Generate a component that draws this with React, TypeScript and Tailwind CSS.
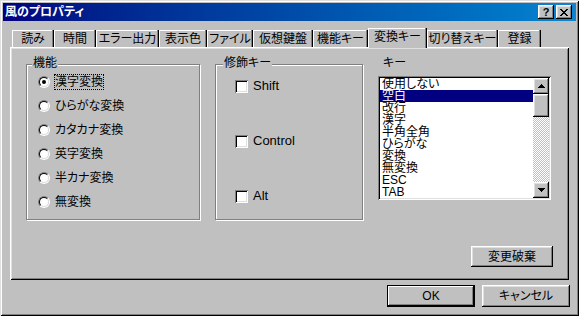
import React from "react";

const raised =
  "shadow-[inset_-1px_-1px_#000000,inset_1px_1px_#ffffff,inset_-2px_-2px_#808080,inset_2px_2px_#dfdfdf]";
const sunken =
  "shadow-[inset_1px_1px_#808080,inset_-1px_-1px_#ffffff,inset_2px_2px_#000000,inset_-2px_-2px_#dfdfdf]";

function Radio({ checked }: { checked?: boolean }) {
  return (
    <div className="w-[12px] h-[12px] rounded-full border border-t-[#808080] border-l-[#808080] border-r-white border-b-white">
      <div className="w-full h-full rounded-full border border-t-black border-l-black border-r-[#dfdfdf] border-b-[#dfdfdf] bg-white flex items-center justify-center">
        {checked && <div className="w-[4px] h-[4px] rounded-full bg-black" />}
      </div>
    </div>
  );
}

function Check() {
  return <div className={`w-[13px] h-[13px] bg-white ${sunken}`} />;
}

function Arrow({ up }: { up?: boolean }) {
  return (
    <svg width="7" height="4" viewBox="0 0 7 4">
      {up ? (
        <path d="M3 0h1v1h-1z M2 1h3v1h-3z M1 2h5v1h-5z M0 3h7v1h-7z" fill="#000" />
      ) : (
        <path d="M0 0h7v1h-7z M1 1h5v1h-5z M2 2h3v1h-3z M3 3h1v1h-1z" fill="#000" />
      )}
    </svg>
  );
}

const tabs: { label: string; w: number; sel?: boolean }[] = [
  { label: "読み", w: 42 },
  { label: "時間", w: 42 },
  { label: "エラー出力", w: 63 },
  { label: "表示色", w: 48 },
  { label: "ファイル", w: 46 },
  { label: "仮想鍵盤", w: 60 },
  { label: "機能キー", w: 55 },
  { label: "変換キー", w: 59, sel: true },
  { label: "切り替えキー", w: 71 },
  { label: "登録", w: 43 },
];

const radios = ["漢字変換", "ひらがな変換", "カタカナ変換", "英字変換", "半カナ変換", "無変換"];
const keys = ["使用しない", "空白", "改行", "漢字", "半角全角", "ひらがな", "変換", "無変換", "ESC", "TAB"];

export default function App() {
  return (
    <div className="w-[579px] h-[316px] bg-[#c0c0c0] p-[3px] flex flex-col text-black text-[12px] leading-[12px] font-['Liberation_Sans','Noto_Sans_CJK_JP',sans-serif] [font-feature-settings:'palt'] shadow-[inset_1px_1px_#dfdfdf,inset_-1px_-1px_#000000,inset_2px_2px_#ffffff,inset_-2px_-2px_#808080]">
      {/* title bar */}
      <div className="h-[18px] flex items-center bg-linear-to-r from-[#000080] to-[#1084d0] pl-[2px] pr-[4px]">
        <span className="text-white font-bold text-[12px] leading-[14px]">風のプロパティ</span>
        <div className="ml-auto flex gap-[2px]">
          <div className={`w-[16px] h-[14px] bg-[#c0c0c0] ${raised} flex items-center justify-center`}>
            <span className="font-bold text-[11px] leading-[11px] font-['Liberation_Sans',sans-serif]">?</span>
          </div>
          <div className={`w-[16px] h-[14px] bg-[#c0c0c0] ${raised} flex items-center justify-center`}>
            <svg width="8" height="7" viewBox="0 0 8 7">
              <path
                d="M0 0h2v1h-2z M6 0h2v1h-2z M1 1h2v1h-2z M5 1h2v1h-2z M2 2h4v1h-4z M3 3h2v1h-2z M2 4h4v1h-4z M1 5h2v1h-2z M5 5h2v1h-2z M0 6h2v1h-2z M6 6h2v1h-2z"
                fill="#000"
              />
            </svg>
          </div>
        </div>
      </div>

      {/* tabs */}
      <div className="mt-[7px] h-[19px] flex items-end pl-[9px]">
        {tabs.map((t) =>
          t.sel ? (
            <div
              key={t.label}
              style={{ width: t.w }}
              className="relative z-10 h-[20px] -mb-px bg-[#c0c0c0] flex items-center justify-center pb-[2px] shadow-[inset_-1px_0_#000000,inset_-2px_0_#808080,inset_1px_1px_#ffffff]"
            >
              {t.label}
            </div>
          ) : (
            <div
              key={t.label}
              style={{ width: t.w }}
              className="h-[17px] flex items-center justify-center shadow-[inset_-1px_0_#000000,inset_-2px_0_#808080,inset_1px_1px_#ffffff]"
            >
              {t.label}
            </div>
          )
        )}
      </div>

      {/* panel */}
      <div className="mx-[7px] h-[233px] bg-[#c0c0c0] shadow-[inset_1px_1px_#ffffff,inset_-1px_-1px_#000000,inset_2px_2px_#dfdfdf,inset_-2px_-2px_#808080] flex items-start pt-[10px] pl-[16px] gap-[15px]">
        {/* 機能 */}
        <div className="relative mt-[7px] w-[174px] h-[156px] border border-[#808080] shadow-[inset_1px_1px_#ffffff,1px_1px_#ffffff] flex flex-col pt-[5px] pl-[11px]">
          <span className="absolute left-[5px] top-[-8px] px-[1px] bg-[#c0c0c0] leading-[12px]">機能</span>
          {radios.map((r, i) => (
            <div key={r} className="h-[24px] flex items-center">
              <Radio checked={i === 0} />
              <span
                className={`ml-[4px] border h-[16px] flex items-center ${
                  i === 0 ? "border-dotted border-black" : "border-transparent"
                }`}
              >
                {r}
              </span>
            </div>
          ))}
        </div>

        {/* 修飾キー */}
        <div className="relative mt-[7px] w-[148px] h-[156px] border border-[#808080] shadow-[inset_1px_1px_#ffffff,1px_1px_#ffffff] flex flex-col pt-[13px] pl-[19px] gap-[39px]">
          <span className="absolute left-[7px] top-[-8px] px-[1px] bg-[#c0c0c0] leading-[12px]">修飾キー</span>
          {["Shift", "Control", "Alt"].map((c) => (
            <div key={c} className="h-[16px] flex items-center">
              <Check />
              <span className="ml-[5px] text-[13px] leading-[14px] font-['Liberation_Sans',sans-serif]">{c}</span>
            </div>
          ))}
        </div>

        {/* キー */}
        <div className="w-[175px] flex flex-col">
          <span className="ml-[5px] leading-[12px]">キー</span>
          <div className={`mt-[7px] w-[173px] h-[124px] bg-white p-[2px] flex ${sunken}`}>
            <div className="flex-1 flex flex-col">
              {keys.map((k, i) => (
                <div
                  key={k}
                  className={`h-[12px] leading-[12px] pl-[2px] ${i === 1 ? "bg-[#000080] text-white" : ""}`}
                >
                  {k}
                </div>
              ))}
            </div>
            <div className="w-[16px] flex flex-col">
              <div className={`h-[16px] bg-[#c0c0c0] ${raised} flex items-center justify-center`}>
                <Arrow up />
              </div>
              <div className={`h-[23px] bg-[#c0c0c0] ${raised}`} />
              <div className="flex-1 bg-[repeating-conic-gradient(#c0c0c0_0%_25%,#ffffff_0%_50%)] [background-size:2px_2px]" />
              <div className={`h-[16px] bg-[#c0c0c0] ${raised} flex items-center justify-center`}>
                <Arrow />
              </div>
            </div>
          </div>
          <div className={`mt-[46px] self-end w-[82px] h-[21px] ${raised} flex items-center justify-center`}>
            変更破棄
          </div>
        </div>
      </div>

      {/* bottom buttons */}
      <div className="mt-[5px] flex justify-end gap-[7px] pr-[6px]">
        <div className="w-[88px] h-[22px] border border-black">
          <div className="w-full h-full shadow-[inset_-1px_-1px_#000000,inset_1px_1px_#ffffff,inset_-2px_-2px_#808080] flex items-center justify-center">
            OK
          </div>
        </div>
        <div className={`w-[88px] h-[22px] ${raised} flex items-center justify-center`}>キャンセル</div>
      </div>
    </div>
  );
}
